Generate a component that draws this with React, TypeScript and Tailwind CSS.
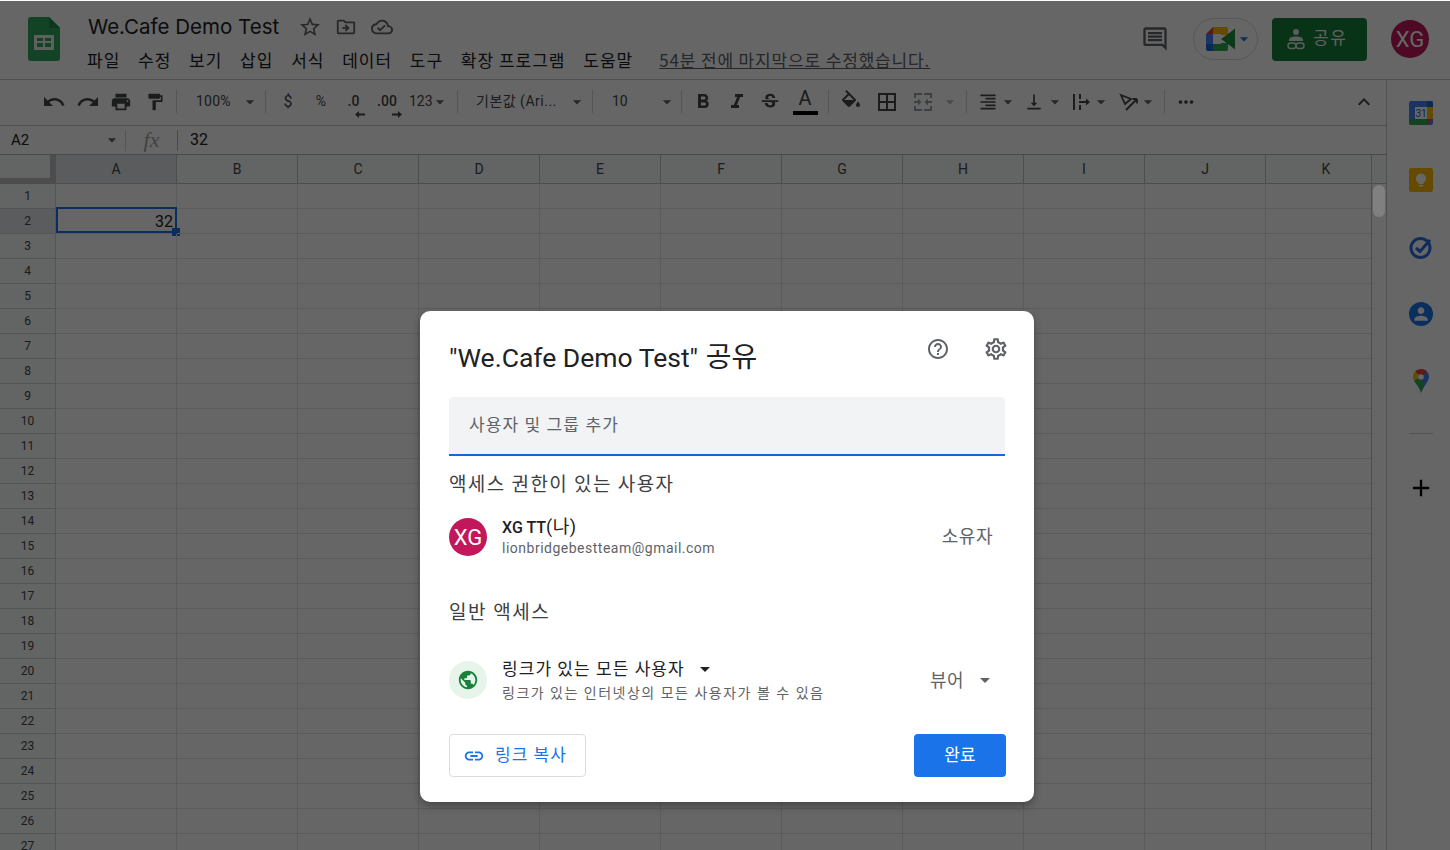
import React from "react";
import {
  MdUndo, MdRedo, MdPrint, MdFormatPaint, MdArrowDropDown, MdFormatBold, MdFormatItalic, MdStrikethroughS,
  MdBorderAll, MdFormatAlignRight, MdVerticalAlignBottom, MdMoreHoriz, MdExpandLess,
  MdOutlineStarBorder, MdOutlineDriveFileMove, MdOutlineCloudDone, MdOutlineComment, MdHelpOutline,
  MdOutlineSettings, MdPublic, MdLink, MdAdd, MdPerson,
} from "react-icons/md";

const cols = ["A", "B", "C", "D", "E", "F", "G", "H", "I", "J", "K"];
const rows = Array.from({ length: 27 }, (_, i) => i + 1);
const menu = ["파일", "수정", "보기", "삽입", "서식", "데이터", "도구", "확장 프로그램", "도움말"];

function Sep({ className = "" }: { className?: string }) {
  return <div className={"w-px h-[23px] bg-[#d4d5d6] shrink-0 " + className} />;
}
function Box({ className = "", children }: { className?: string; children?: React.ReactNode }) {
  return <div className={"flex items-center justify-center shrink-0 h-full text-[#444746] " + className}>{children}</div>;
}
function Spread({ className = "", children }: { className?: string; children?: React.ReactNode }) {
  return <div className={"flex items-center justify-between shrink-0 h-full text-[#444746] " + className}>{children}</div>;
}
function Arrow({ className = "", light }: { className?: string; light?: boolean }) {
  return <MdArrowDropDown size={20} className={"shrink-0 " + (light ? "text-[#b4b7ba] " : "text-[#5f6368] ") + className} />;
}

function SheetsLogo() {
  return (
    <svg width="32" height="44" viewBox="0 0 32 44">
      <path d="M3 0h18l11 11v30a3 3 0 0 1-3 3H3a3 3 0 0 1-3-3V3a3 3 0 0 1 3-3z" fill="#2da85e" />
      <path d="M21 0l11 11H21z" fill="#1c8a48" />
      <path d="M6 18h20v15H6z" fill="#e8f0ea" />
      <path d="M9 21h6v3H9zM17 21h6v3h-6zM9 26h6v4H9zM17 26h6v4h-6z" fill="#2da85e" />
    </svg>
  );
}
function MeetLogo() {
  return (
    <svg width="30" height="24" viewBox="0 0 30 24">
      <path d="M0 7l7-7v7z" fill="#ea4335" />
      <path d="M0 7h7v10H0z" fill="#4285f4" />
      <path d="M7 0h13a2 2 0 0 1 2 2v6h-7V7H7z" fill="#fbbc04" />
      <path d="M0 17h7v7H2a2 2 0 0 1-2-2z" fill="#1967d2" />
      <path d="M7 17h8v-1h7v6a2 2 0 0 1-2 2H7z" fill="#34a853" />
      <path d="M15 12l7-5 7-5.500v21l-7-5.500z" fill="#1e8e3e" />
    </svg>
  );
}
function DecimalArrow({ right }: { right?: boolean }) {
  return (
    <svg width="10" height="7" viewBox="0 0 10 7" className="absolute -bottom-[6px] -right-[5px] text-[#444746]">
      <path d={right ? "M0 2.500h6V0l4 3.500L6 7V4.500H0z" : "M10 2.500H4V0L0 3.500 4 7V4.500h6z"} fill="currentColor" />
    </svg>
  );
}
function FillIcon() {
  return (
    <svg width="24" height="24" viewBox="0 0 24 24" fill="currentColor">
      <path d="M16.560 8.940L7.620 0 6.210 1.410l2.380 2.380-5.150 5.150c-.59.59-.59 1.540 0 2.120l5.500 5.500c.29.29.68.44 1.060.44s.77-.15 1.060-.44l5.500-5.500c.59-.58.59-1.530 0-2.120zM5.210 10L10 5.210 14.790 10H5.210z" />
      <path d="M19 11.500s-2 2.170-2 3.500c0 1.100.9 2 2 2s2-.9 2-2c0-1.330-2-3.500-2-3.500z" />
    </svg>
  );
}
function MergeIcon() {
  return (
    <svg width="20" height="20" viewBox="0 0 20 20" className="text-[#9aa0a6]" fill="currentColor">
      <path d="M1 1h8v2H3v3H1zM11 1h8v5h-2V3h-6zM1 14h2v3h6v2H1zM17 14h2v5h-8v-2h6z" />
      <path d="M1 9h4V6.500L8.500 10 5 13.500V11H1zM19 9h-4V6.500L11.500 10l3.500 3.500V11h4z" />
    </svg>
  );
}
function WrapIcon() {
  return (
    <svg width="20" height="20" viewBox="0 0 20 20">
      <path d="M2 2h2v16H2zM8 2h2v5H8zM8 13h2v5H8zM8 9h7V6.500l4 3.500-4 3.500V11H8z" fill="currentColor" />
    </svg>
  );
}
function RotateIcon() {
  return (
    <svg width="20" height="20" viewBox="0 0 20 20" fill="none" stroke="currentColor" strokeWidth="1.800">
      <path d="M2 3l10 4-6 5z" />
      <path d="M7 18L18 7M18 7h-4.500M18 7v4.500" />
    </svg>
  );
}
function ShareIcon() {
  return (
    <svg width="18" height="22" viewBox="0 0 18 22" fill="none" stroke="#e4e7e5" strokeWidth="1.500">
      <circle cx="9" cy="4" r="3" fill="#e4e7e5" stroke="none" />
      <path d="M2 12c0-3 4-3.500 7-3.500s7 .5 7 3.500v1H2z" fill="#e4e7e5" stroke="none" />
      <rect x="1" y="15" width="8" height="5.500" rx="2.700" />
      <rect x="9" y="15" width="8" height="5.500" rx="2.700" />
    </svg>
  );
}

function Calendar() {
  return (
    <svg width="24" height="24" viewBox="0 0 24 24">
      <rect width="24" height="24" rx="2" fill="#4285f4" />
      <path d="M18 0h4a2 2 0 0 1 2 2v4h-6z" fill="#1967d2" />
      <path d="M18 6h6v12h-6z" fill="#fbbc04" />
      <path d="M0 18h18v6H2a2 2 0 0 1-2-2z" fill="#34a853" />
      <path d="M18 18h6l-6 6z" fill="#ea4335" />
      <rect x="6" y="6" width="12" height="12" fill="#fff" />
      <text x="12" y="16" textAnchor="middle" fontSize="10" fill="#1967d2" fontFamily="Roboto">31</text>
    </svg>
  );
}
function Keep() {
  return (
    <svg width="24" height="24" viewBox="0 0 24 24">
      <rect width="24" height="24" rx="2" fill="#fbbc04" />
      <circle cx="12" cy="10.500" r="5" fill="#fff" />
      <path d="M9.500 13h5v3h-5zM10 17h4v1.500h-4z" fill="#fff" />
    </svg>
  );
}
function Tasks() {
  return (
    <svg width="24" height="24" viewBox="0 0 24 24" fill="none">
      <circle cx="11.500" cy="13" r="9.500" stroke="#2a6fdb" strokeWidth="3" />
      <path d="M7 13l4 3.500L21 5" stroke="#2a6fdb" strokeWidth="3" />
    </svg>
  );
}
function Contacts() {
  return (
    <div className="w-[24px] h-[24px] rounded-full bg-[#1a73e8] flex items-center justify-center">
      <MdPerson size={20} className="text-white" />
    </div>
  );
}
function Maps() {
  return (
    <svg width="16" height="24" viewBox="0 0 16 24">
      <path d="M8 0c4.500 0 8 3.400 8 7.800 0 5-5 8.200-8 16.200V12z" fill="#4285f4" />
      <path d="M8 0C5.500 0 3.500 1 2 2.700L8 8l5.900-5.200C12.500 1 10.500 0 8 0z" fill="#ea4335" />
      <path d="M2 2.700C.8 4 0 5.800 0 7.800c0 1.400.4 2.600 1 3.800L8 8z" fill="#fbbc04" />
      <path d="M1 11.600C3 15.500 6.500 18.500 8 24c.8-2.800 2-5 3.400-7L8 8z" fill="#34a853" />
      <circle cx="8" cy="8" r="2.800" fill="#fff" />
    </svg>
  );
}

export default function App() {
  return (
    <div className="relative w-[1450px] h-[850px] overflow-hidden bg-white font-['Roboto','Noto_Sans_CJK_KR',sans-serif]">
      <header className="flex h-[80px] border-b border-[#c8c9ca] pt-[1px]">
        <div className="pl-[28px] pt-[16px] w-[88px] shrink-0">
          <SheetsLogo />
        </div>
        <div className="flex-1 min-w-0">
          <div className="flex items-center h-[32px] mt-[10px]">
            <span className="text-[20.500px] leading-[32px] text-[#202124] font-['Inter','Noto_Sans_CJK_KR',sans-serif] w-[210px] whitespace-nowrap">We.Cafe Demo Test</span>
            <MdOutlineStarBorder size={24} className="text-[#5f6368]" />
            <MdOutlineDriveFileMove size={22} className="text-[#5f6368] ml-[13px]" />
            <MdOutlineCloudDone size={22} className="text-[#5f6368] ml-[14px]" />
          </div>
          <div className="flex items-center h-[24px] mt-[5px] text-[17px] tracking-[1px] text-[#202124] whitespace-nowrap font-['Noto_Sans_CJK_KR','Roboto',sans-serif]">
            <div className="flex gap-[17.750px] -ml-[1px]">
              {menu.map((m) => (
                <span key={m}>{m}</span>
              ))}
            </div>
            <span className="ml-[26px] tracking-[0.85px] underline text-[#5f6368]">54분 전에 마지막으로 수정했습니다.</span>
          </div>
        </div>
        <div className="flex items-center h-[78px] pr-[21px] pb-[2px] shrink-0">
          <MdOutlineComment size={28} className="text-[#5f6368] mr-[24px]" />
          <div className="flex items-center w-[65px] h-[42px] rounded-full border border-[#dadce0] pl-[12px] mr-[14px]">
            <MeetLogo />
            <MdArrowDropDown size={20} className="text-[#1a73e8] -ml-[2px]" />
          </div>
          <div className="flex items-center gap-[8px] w-[95px] h-[43px] rounded bg-[#188038] pl-[15px] text-[17px] tracking-[1.500px] text-[#f1f3f4] mr-[24px] font-['Noto_Sans_CJK_KR',sans-serif]">
            <ShareIcon />
            <span className="-mt-[5px]">공유</span>
          </div>
          <div className="flex items-center justify-center w-[38px] h-[38px] rounded-full bg-[#c2185b] text-[22px] text-white">XG</div>
        </div>
      </header>

      <div className="flex h-[770px]">
        <main className="w-[1386px] shrink-0 flex flex-col min-w-0">
          <div className="flex items-center h-[46px] border-b border-[#c8c9ca] pl-[37px] pb-[2px] text-[14px] text-[#444746] whitespace-nowrap">
            <Box className="w-[34px]"><MdUndo size={24} /></Box>
            <Box className="w-[33px]"><MdRedo size={24} /></Box>
            <Box className="w-[34px]"><MdPrint size={22} /></Box>
            <Box className="w-[34px]"><MdFormatPaint size={20} /></Box>
            <Sep className="ml-[4px]" />
            <Spread className="w-[88px] pl-[19px] pr-[5px]"><span className="tracking-[0.2px]">100%</span><Arrow /></Spread>
            <Sep />
            <Box className="w-[44px] text-[16px]">$</Box>
            <Box className="w-[22px]">%</Box>
            <Box className="w-[44px] font-medium"><span className="relative pr-[1px]">.0<DecimalArrow /></span></Box>
            <Box className="w-[22px] font-medium"><span className="relative">.00<DecimalArrow right /></span></Box>
            <Spread className="w-[59px] pl-[11px] pr-[9px]"><span>123</span><Arrow className="-ml-[3px]" /></Spread>
            <Sep />
            <Spread className="w-[134px] pl-[18px] pr-[5px] tracking-[0.5px]"><span>기본값 (Ari...</span><Arrow /></Spread>
            <Sep />
            <Spread className="w-[88px] pl-[19px] pr-[4px]"><span>10</span><Arrow /></Spread>
            <Sep />
            <Box className="w-[42px]"><MdFormatBold size={24} /></Box>
            <Box className="w-[26px]"><MdFormatItalic size={24} /></Box>
            <Box className="w-[40px]"><MdStrikethroughS size={22} /></Box>
            <div className="w-[30px] h-full flex flex-col items-center justify-center shrink-0 text-[#444746]">
              <span className="text-[20px] leading-[22px] -mt-[2px]">A</span>
              <div className="w-[25px] h-[4px] bg-black mt-[2px]" />
            </div>
            <Sep className="ml-[8px]" />
            <Box className="w-[44px]"><FillIcon /></Box>
            <Box className="w-[28px]"><MdBorderAll size={24} /></Box>
            <Box className="w-[44px]"><MergeIcon /></Box>
            <Box className="w-[10px]"><Arrow light /></Box>
            <Sep className="ml-[11px]" />
            <Box className="ml-[11px]"><MdFormatAlignRight size={20} /><Arrow /></Box>
            <Box className="ml-[6px]"><MdVerticalAlignBottom size={20} /><Arrow className="ml-[1px]" /></Box>
            <Box className="ml-[6px]"><WrapIcon /><Arrow /></Box>
            <Box className="ml-[8px]"><RotateIcon /><Arrow className="-ml-[1px]" /></Box>
            <Sep className="ml-[6px]" />
            <Box className="ml-[10px]"><MdMoreHoriz size={22} /></Box>
            <Box className="ml-auto mr-[10px]"><MdExpandLess size={24} /></Box>
          </div>

          <div className="flex items-center h-[29px] border-b border-[#b5b6b7] text-[#202124]">
            <div className="flex items-center w-[125px] pl-[11px] pr-[3px] justify-between text-[15px]">
              <span>A2</span>
              <Arrow />
            </div>
            <div className="w-px h-[21px] bg-[#d4d5d6]" />
            <span className="w-[51px] text-center text-[22px] leading-none italic text-[#a6a8aa] font-['Liberation_Serif',serif]">fx</span>
            <div className="w-px h-[21px] bg-[#b5b6b7]" />
            <span className="pl-[12px] text-[16px]">32</span>
          </div>

          <div className="flex flex-1 min-h-0">
            <div className="w-[1371px] overflow-hidden shrink-0">
              <div className="flex h-[29px] w-[1387px] border-b border-[#c0c1c2] bg-[#f8f9fa]">
                <div className="relative w-[56px] shrink-0 border-r border-[#c0c1c2]">
                  <div className="absolute right-0 top-0 bottom-0 w-[5px] bg-[#c0c1c2]" />
                  <div className="absolute left-0 right-0 bottom-0 h-[5px] bg-[#c0c1c2]" />
                </div>
                {cols.map((c) => (
                  <div
                    key={c}
                    className={
                      "w-[121px] shrink-0 flex items-center justify-center border-r border-[#c0c1c2] text-[14px] text-[#444746] " +
                      (c === "A" ? "bg-[#e1e5ea]" : "")
                    }
                  >
                    {c}
                  </div>
                ))}
              </div>
              {rows.map((r) => (
                <div key={r} className="flex h-[25px] w-[1387px]">
                  <div
                    className={
                      "w-[56px] shrink-0 flex items-center justify-center border-r border-b border-[#d0d1d2] text-[12px] text-[#444746] " +
                      (r === 2 ? "bg-[#e1e5ea]" : "bg-[#f8f9fa]")
                    }
                  >
                    {r}
                  </div>
                  {cols.map((c) => (
                    <div key={c} className="relative w-[121px] shrink-0 border-r border-b border-[#e2e3e3] text-[16px] text-[#202124]">
                      {r === 2 && c === "A" && (
                        <div className="absolute -top-[2px] left-0 -right-[1px] bottom-0 border-2 border-[#1a73e8] flex items-center justify-end pr-[2px] pt-[4px] leading-none">
                          32
                          <div className="absolute -right-[5px] -bottom-[5px] w-[8px] h-[8px] bg-[#1a73e8]" />
                        </div>
                      )}
                    </div>
                  ))}
                </div>
              ))}
            </div>
            <div className="w-[15px] shrink-0 border-l border-[#c0c1c2]">
              <div className="h-[29px] border-b border-[#c0c1c2] bg-[#f8f9fa]" />
            </div>
          </div>
        </main>

        <aside className="flex-1 flex flex-col items-center border-l border-[#c8c9ca] pl-[5px] pt-[21px] gap-[43px]">
          <Calendar />
          <Keep />
          <Tasks />
          <Contacts />
          <Maps />
          <div className="w-[24px] h-px bg-[#d0d1d2] -mt-[3px]" />
          <MdAdd size={28} className="text-black -mt-[3px]" />
        </aside>
      </div>

      <div className="absolute inset-x-0 top-[1px] bottom-0 bg-black/60" />
      <div className="absolute left-[1373px] top-[185px] w-[12px] h-[32px] rounded-full bg-[#808080]" />

      <div
        role="dialog"
        className="absolute left-[420px] top-[311px] w-[614px] h-[491px] rounded-[10px] bg-white pl-[29px] pr-[29px] shadow-[0_4px_8px_rgba(0,0,0,0.3)] text-[#3c4043]"
      >
        <div className="relative flex items-center h-[86px] pt-[8px]">
          <h1 className="text-[26.500px] text-[#202124] font-normal whitespace-nowrap">"We.Cafe Demo Test" <span className="text-[28px] ml-[1px]">공유</span></h1>
          <MdHelpOutline size={24} className="absolute left-[477px] top-[26px] text-[#5f6368]" />
          <MdOutlineSettings size={26} className="absolute left-[534px] top-[25px] text-[#5f6368]" />
        </div>
        <div className="flex items-center w-[556px] h-[59px] rounded-t bg-[#f1f3f4] border-b-2 border-[#1967d2] pl-[20px] pt-[1px] text-[17px] tracking-[1.100px] text-[#5f6368]">
          사용자 및 그룹 추가
        </div>
        <div className="mt-[15px] text-[19px] tracking-[1.350px] leading-[27px] text-[#3c4043]">액세스 권한이 있는 사용자</div>
        <div className="flex items-center mt-[19px] h-[40px]">
          <div className="flex items-center justify-center w-[38px] h-[38px] rounded-full bg-[#c2185b] text-[22px] text-white">XG</div>
          <div className="ml-[15px] flex-1">
            <div className="text-[16px] leading-[21px] font-medium text-[#202124]">XG TT<span className="font-normal text-[18px] tracking-[0.5px]">(나)</span></div>
            <div className="text-[14px] leading-[20px] tracking-[0.5px] text-[#5f6368]">lionbridgebestteam@gmail.com</div>
          </div>
          <span className="mr-[12px] -mt-[2px] text-[18px] tracking-[0.5px] text-[#5f6368]">소유자</span>
        </div>
        <div className="mt-[42px] text-[19px] tracking-[1.500px] leading-[27px] text-[#3c4043]">일반 액세스</div>
        <div className="flex items-center mt-[30px] h-[50px]">
          <div className="flex items-center justify-center w-[38px] h-[38px] rounded-full bg-[#e6f4ea] -mt-[3px]">
            <MdPublic size={22} className="text-[#188038]" />
          </div>
          <div className="ml-[15px] flex-1">
            <div className="flex items-center pt-[1px] text-[17px] tracking-[1.050px] leading-[24px] text-[#202124]">
              링크가 있는 모든 사용자
              <MdArrowDropDown size={24} className="ml-[8px] text-[#202124]" />
            </div>
            <div className="text-[14px] leading-[25px] tracking-[1.500px] text-[#5f6368] whitespace-nowrap">링크가 있는 인터넷상의 모든 사용자가 볼 수 있음</div>
          </div>
          <span className="-mt-[2px] text-[18px] tracking-[0.5px] text-[#5f6368]">뷰어</span>
          <MdArrowDropDown size={24} className="ml-[9px] mr-[8px] -mt-[2px] text-[#5f6368]" />
        </div>
        <div className="flex items-center justify-between mt-[28px] w-[557px]">
          <div className="flex items-center h-[43px] w-[137px] rounded border border-[#dadce0] pl-[13px] text-[17px] tracking-[1px] text-[#1a73e8]">
            <MdLink size={22} />
            <span className="ml-[10px] pt-[1px]">링크 복사</span>
          </div>
          <div className="flex items-center justify-center w-[92px] h-[43px] rounded bg-[#1a73e8] text-[17px] text-white">완료</div>
        </div>
      </div>
    </div>
  );
}
